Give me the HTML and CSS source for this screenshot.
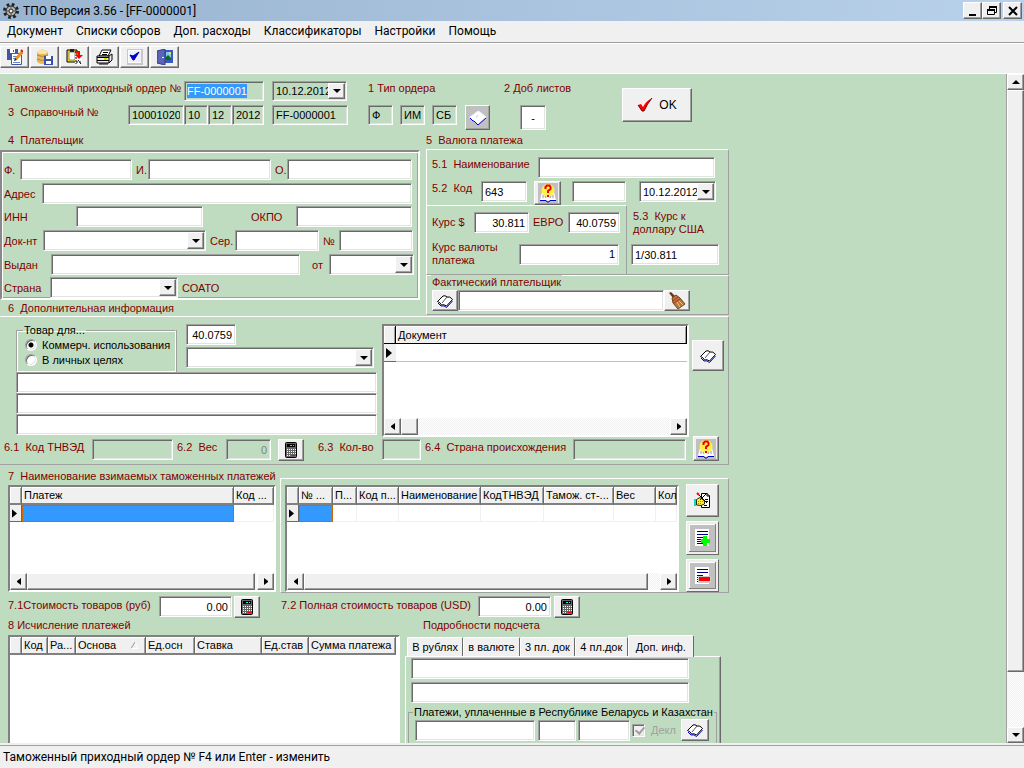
FILE: index.html
```html
<!DOCTYPE html>
<html lang="ru">
<head>
<meta charset="utf-8">
<title>ТПО Версия 3.56 - [FF-0000001]</title>
<link rel="stylesheet" href="styles.css">
</head>
<body>
<svg class="defs" aria-hidden="true">
  <symbol id="book" viewBox="0 0 16 16">
    <path d="M0.500 8.500L6 3Q8 2 10 4Q13 3 15.500 6.500L9.500 13Q7 11 4.500 12Q3 9 0.500 8.500Z" fill="#fff" stroke="#000"/>
    <path d="M1 10L4 13Q7 12 9.500 14.500L15.500 8" fill="none" stroke="#00c"/>
    <path d="M10 4L5 10" stroke="#555"/>
  </symbol>
  <symbol id="page" viewBox="0 0 18 16">
    <path d="M1 7L9 1L11 2L17 7L9 14L1 8Z" fill="#fff" stroke="#eee"/>
    <path d="M1 8L4 11L5 11L9 15L17 8" fill="none" stroke="#00e"/>
    <path d="M9 5L7 8" stroke="#ccc"/>
  </symbol>
  <symbol id="help" viewBox="0 0 20 20">
    <path d="M0 0H20V20H0Z" fill="#c0c0c0"/>
    <path d="M2 17L4 9H7L9 12L11 12L13 9H16L18 17H12L10 18L8 17Z" fill="#fff"/>
    <path d="M2 17.500H8L9 19H11L12 17.500H18" fill="none" stroke="#00c"/>
    <circle cx="10" cy="7.500" r="6.500" fill="#fff04a"/>
    <path d="M5 12V15M15 12V15M7 13L8 15M13 13L12 15" stroke="#999"/>
    <path d="M7.500 6V4L9 2.500H11.500L12.500 4V6L10 8V10M10 12V14" fill="none" stroke="#e00" stroke-width="2"/>
  </symbol>
  <symbol id="calc" viewBox="0 0 12 16">
    <rect x="0.500" y="0.500" width="11" height="15" rx="1" fill="#666" stroke="#000"/>
    <path d="M2 2H10V5H2Z" fill="#000"/>
    <path d="M5 3H7V4H5ZM8 3H9V4H8Z" fill="#0ff"/>
    <path d="M2 7.500H11M2 9.500H11M2 11.500H11M2 13.500H6" stroke="#fff" stroke-dasharray="1 1"/>
    <path d="M7 13H10V14H7Z" fill="#f00"/>
  </symbol>
  <symbol id="broom" viewBox="0 0 18 18">
    <path d="M1 1L3 0L7 4L5 6Z" fill="#6a3512"/>
    <path d="M4 6L8 3L12 6L17 12L10 17L5 11Z" fill="#b57a3c" stroke="#6f451d"/>
    <path d="M5 9L10 5M6 11L12 7" stroke="#c22"/>
    <path d="M9 10L12 15M11 9L15 13" stroke="#edc27f"/>
  </symbol>
  <symbol id="lines" viewBox="0 0 17 17">
    <path d="M1 0H15V17H1Z" fill="#fff"/>
    <path d="M3 2.500H14M3 5.500H14M3 8.500H9M3 10.500H7M3 12.500H7M3 14.500H9" stroke="#000080"/>
  </symbol>
  <symbol id="left" viewBox="0 0 4 7"><path d="M4 0V7L0 4V3Z"/></symbol>
  <symbol id="right" viewBox="0 0 4 7"><path d="M0 0V7L4 4V3Z"/></symbol>
  <symbol id="down" viewBox="0 0 8 4"><path d="M0 0H8L4 4Z"/></symbol>
  <symbol id="marker" viewBox="0 0 6 10"><path d="M0 0L6 5L0 10Z"/></symbol>
</svg>

<div class="app">
  <header class="titlebar">
    <svg class="gear" viewBox="0 0 16 16" aria-hidden="true">
      <circle cx="8" cy="8" r="6.500" fill="none" stroke="#222" stroke-width="3" stroke-dasharray="2.6 2.5"/>
      <circle cx="8" cy="8" r="5" fill="#b5b5ae" stroke="#222"/>
      <circle cx="8" cy="8" r="2" fill="#eee" stroke="#222"/>
      <path d="M8 3V6M3 8H6M10 8H13M8 10V13" stroke="#555"/>
    </svg>
    <h1>ТПО Версия 3.56 - [FF-0000001]</h1>
    <div class="winbtns">
      <button class="btn" aria-label="Свернуть"><svg width="12" height="12" viewBox="0 0 12 12"><path d="M2 9H9V11H2Z"/></svg></button>
      <button class="btn" aria-label="Восстановить"><svg width="12" height="12" viewBox="0 0 12 12" fill="none" stroke="#000"><path d="M3.500 5V2.500H10.500V7.500H9M1.500 5.500H8.500V9.500H1.500Z"/><path d="M3 2H11M1 5H9" stroke-width="2"/></svg></button>
      <button class="btn close" aria-label="Закрыть"><svg width="12" height="12" viewBox="0 0 12 12"><path d="M2 2L10 10M10 2L2 10" stroke="#000" stroke-width="2"/></svg></button>
    </div>
  </header>

  <nav class="menubar">
    <a href="#">Документ</a><a href="#">Списки сборов</a><a href="#">Доп. расходы</a><a href="#">Классификаторы</a><a href="#">Настройки</a><a href="#">Помощь</a>
  </nav>

  <div class="toolbar">
    <button class="btn" aria-label="Сохранить"><svg width="16" height="16" viewBox="0 0 16 16">
      <path d="M0 0H11V11H0Z" fill="#3f57a6"/><path d="M3 0H8V4H3Z" fill="#fff"/><path d="M6 1H7V3H6Z" fill="#3f57a6"/><path d="M4.500 4.500H14.500V15.500H4.500Z" fill="#fff" stroke="#3f57a6"/><path d="M6 7.500H11M6 9.500H9M6 13.500H13" stroke="#5b8ad0"/><path d="M15 3L9 10" stroke="#f0901c" stroke-width="3"/><path d="M14 1L16 3" stroke="#c22" stroke-width="2"/><path d="M8 9L7 12L10 11Z" fill="#222"/></svg></button>
    <button class="btn" aria-label="Сохранить в базу"><svg width="16" height="16" viewBox="0 0 16 16">
      <path d="M0 3Q5.500 -2 11 3V13Q5 17 0 13Z" fill="#e6b95c"/><ellipse cx="5.500" cy="3" rx="5" ry="2" fill="#fbe7ae"/><path d="M0 6Q5 9 11 6M0 10Q5 13 11 10" stroke="#b98423" fill="none"/><path d="M7 7H16V16H7Z" fill="#3c4fa8"/><path d="M9 7H14V10H9ZM9 12H14V15H9Z" fill="#fff"/></svg></button>
    <button class="btn" aria-label="Вставить"><svg width="18" height="16" viewBox="0 0 18 16">
      <path d="M1 1H11V13H1Z" fill="#ffe600" stroke="#000"/><path d="M3 3H9V11H3Z" fill="#fff" stroke="#888"/><path d="M4 0H8V3H4Z" fill="#222"/><path d="M9 7H16V15.500H9Z" fill="#fff"/><path d="M9 2H14V6H17L13 10L9 6H12V4H9Z" fill="#f00"/><path d="M10 8V15M10 13H16M12 11L15 15" stroke="#000" stroke-dasharray="2 1" fill="none"/></svg></button>
    <button class="btn" aria-label="Печать"><svg width="18" height="16" viewBox="0 0 18 16">
      <path d="M6 1H15L12 7H3Z" fill="#fff" stroke="#000"/><path d="M1 7H13L16 5V11L13 14H1Z" fill="#eee" stroke="#000"/><path d="M1 8.500H13M1 11.500H13M13 7V14M7 3.500H12M6 5.500H11M3 15H12" stroke="#000"/><path d="M8 10H11" stroke="#dd0" stroke-width="2"/></svg></button>
    <button class="btn" aria-label="Проверить"><svg width="16" height="16" viewBox="0 0 16 16">
      <path d="M0 0H16V16H0Z" fill="#c8c8c8"/><path d="M1 1H14V14H1Z" fill="#fff"/><path d="M2 2H14V13H2Z" fill="#eef"/><path d="M3 6L6 7L12 3L7 11H6Z" fill="#0000c0" stroke="#0000c0"/></svg></button>
    <button class="btn" aria-label="Выход"><svg width="16" height="16" viewBox="0 0 16 16">
      <path d="M6 1H16V14H6Z" fill="#3b57c4"/><path d="M9 3H14V11H9Z" fill="#7fc8e8"/><path d="M9 8L11 6L14 9V11H9Z" fill="#116622"/><path d="M12 3H14V5H12Z" fill="#fd3"/><path d="M0 2L8 0V16L0 14Z" fill="#5a64b8" stroke="#333c84"/><path d="M5 8H7V9H5Z" fill="#fff"/></svg></button>
  </div>

  <main class="main">
    <form class="workspace">
      <div class="form">
        <section class="head">
          <div class="head-rows">
            <div class="row r-order">
              <label for="ord">Таможенный приходный ордер №</label>
              <span class="field flat"><input id="ord" value="FF-0000001" hidden><mark>FF-0000001</mark></span>
              <span class="combo flat"><select aria-label="Дата ордера"><option>10.12.2012</option></select><i class="btn"><svg width="8" height="4"><use href="#down"/></svg></i></span>
              <span class="lbl">1 Тип ордера</span>
              <label for="sheets">2 Доб листов</label>
            </div>
            <div class="row r-ref">
              <label for="ref">3&nbsp; Справочный №</label>
              <input id="ref" class="flat" value="10001020"><input class="flat" aria-label="День" value="10"><input class="flat" aria-label="Месяц" value="12"><input class="flat" aria-label="Год" value="2012">
              <input class="flat c6" aria-label="Номер" value="FF-0000001">
              <input class="flat c8" aria-label="Тип 1" value="Ф"><input class="flat c10" aria-label="Тип 2" value="ИМ"><input class="flat c12" aria-label="Тип 3" value="СБ">
              <button type="button" class="btn pagebtn c14" aria-label="Справочник типов"><svg width="18" height="16"><use href="#page"/></svg></button>
              <input id="sheets" class="c16 mid" value="-">
            </div>
          </div>
          <button type="button" class="btn ok"><svg width="16" height="16" viewBox="0 0 16 16" aria-hidden="true"><path d="M1 8L4 7L6 10Q9 4 15 1Q10 7 7 14H5Z" fill="#f00"/><path d="M1 8L5 14H7Q10 7 15 1" fill="none" stroke="#700"/></svg>OK</button>
        </section>

        <section class="cols">
          <div class="payer">
            <h2>4&nbsp; Плательщик</h2>
            <div class="payer-panel">
              <div class="row p1"><label for="f">Ф.</label><input id="f"><label class="in" for="i">И.</label><input id="i"><label class="in" for="o">О.</label><input id="o"></div>
              <div class="row p2"><label for="addr">Адрес</label><input id="addr"></div>
              <div class="row p3"><label for="inn">ИНН</label><input id="inn"><label class="far" for="okpo">ОКПО</label><input id="okpo"></div>
              <div class="row p4"><label for="doc">Док-нт</label><span class="combo"><select id="doc"><option></option></select><i class="btn"><svg width="8" height="4"><use href="#down"/></svg></i></span><label class="in" for="ser">Сер.</label><input id="ser"><label class="in" for="num">№</label><input id="num"></div>
              <div class="row p5"><label for="iss">Выдан</label><input id="iss"><label class="from" for="ot">от</label><span class="combo"><select id="ot"><option></option></select><i class="btn"><svg width="8" height="4"><use href="#down"/></svg></i></span></div>
              <div class="row p6"><label for="country">Страна</label><span class="combo"><select id="country"><option></option></select><i class="btn"><svg width="8" height="4"><use href="#down"/></svg></i></span><span class="lbl in">СОАТО</span></div>
            </div>
            <h2 class="h6">6&nbsp; Дополнительная информация</h2>
          </div>

          <div class="currency">
            <h2>5&nbsp; Валюта платежа</h2>
            <div class="cur-panel">
              <div class="row top v1"><label for="cname">5.1&nbsp; Наименование</label><input id="cname"></div>
              <div class="row top v2"><label for="ccode">5.2&nbsp; Код</label><input id="ccode" value="643"><button type="button" class="btn c4" aria-label="Справочник валют"><svg width="20" height="20"><use href="#help"/></svg></button><input class="c6" aria-label="Валюта"><span class="combo c8"><select aria-label="Дата курса"><option>10.12.2012</option></select><i class="btn"><svg width="8" height="4"><use href="#down"/></svg></i></span></div>
              <div class="rates">
                <div class="rates-l">
                  <div class="row v3"><label for="usd">Курс $</label><input id="usd" class="num" value="30.811"><label class="in" for="eur">ЕВРО</label><input id="eur" class="num" value="40.0759"></div>
                  <div class="row v4"><label for="rate">Курс валюты<br>платежа</label><input id="rate" class="num" value="1"></div>
                </div>
                <div class="rates-r"><label for="r53">5.3&nbsp; Курс к<br>доллару США</label><input id="r53" value="1/30.811"></div>
              </div>
            </div>
            <fieldset class="actual">
              <legend>Фактический плательщик</legend>
              <div class="row v5"><button type="button" class="btn" aria-label="Выбрать"><svg width="16" height="16"><use href="#book"/></svg></button><input aria-label="Фактический плательщик"><button type="button" class="btn" aria-label="Очистить"><svg width="18" height="18"><use href="#broom"/></svg></button></div>
            </fieldset>
          </div>
        </section>

        <section class="extra">
          <div class="extra-main">
            <div class="extra-l">
              <div class="purpose-row">
                <fieldset class="purpose">
                  <legend>Товар для...</legend>
                  <label><input type="radio" name="use" checked>Коммерч. использования</label>
                  <label><input type="radio" name="use">В личных целях</label>
                </fieldset>
                <div class="purpose-r">
                  <input class="num short" aria-label="Курс" value="40.0759">
                  <span class="combo"><select aria-label="Вид"><option></option></select><i class="btn"><svg width="8" height="4"><use href="#down"/></svg></i></span>
                </div>
              </div>
              <input aria-label="Строка 1"><input aria-label="Строка 2"><input aria-label="Строка 3">
            </div>
            <div class="grid docs">
              <table>
                <colgroup><col class="ind"><col></colgroup>
                <thead><tr><th></th><th>Документ</th></tr></thead>
                <tbody><tr><td class="cur"><svg width="6" height="10"><use href="#marker"/></svg></td><td></td></tr></tbody>
              </table>
              <div class="hscroll"><i class="btn"><svg width="4" height="7"><use href="#left"/></svg></i><i class="btn thumb"></i><i class="track"></i><i class="btn"><svg width="4" height="7"><use href="#right"/></svg></i></div>
            </div>
            <button type="button" class="btn docbtn" aria-label="Документы"><svg width="16" height="16"><use href="#book"/></svg></button>
          </div>
          <div class="row top e1">
            <label for="e1">6.1&nbsp; Код ТНВЭД</label><input id="e1" class="flat" disabled>
            <label class="in" for="e2">6.2&nbsp; Вес</label><input id="e2" class="flat num" value="0" disabled>
            <button type="button" class="btn c6" aria-label="Калькулятор"><svg width="12" height="16"><use href="#calc"/></svg></button>
            <label class="c8" for="e3">6.3&nbsp; Кол-во</label><input id="e3" class="flat" disabled>
            <label class="in" for="e4">6.4&nbsp; Страна происхождения</label><input id="e4" class="flat" disabled>
            <button type="button" class="btn c13" aria-label="Справочник стран"><svg width="20" height="20"><use href="#help"/></svg></button>
          </div>
        </section>

        <section class="pays">
          <div class="pays-l">
            <h2>7&nbsp; Наименование взимаемых таможенных платежей</h2>
            <div class="grid blue">
              <table>
                <colgroup><col class="ind"><col><col class="w40"></colgroup>
                <thead><tr><th></th><th>Платеж</th><th>Код ...</th></tr></thead>
                <tbody><tr><td class="cur"><svg width="5" height="9" viewBox="0 0 6 10"><use href="#marker"/></svg></td><td class="hot"></td><td></td></tr></tbody>
              </table>
              <div class="hscroll"><i class="btn"><svg width="4" height="7"><use href="#left"/></svg></i><i class="btn thumb long"></i><i class="track t4"></i><i class="btn"><svg width="4" height="7"><use href="#right"/></svg></i></div>
            </div>
          </div>
          <div class="pays-r">
            <div class="grid blue">
              <table>
                <colgroup><col class="ind"><col class="w34"><col class="w24"><col class="w42"><col class="w82"><col class="w63"><col class="w70"><col class="w42"><col></colgroup>
                <thead><tr><th></th><th>№ ...</th><th>П...</th><th>Код п...</th><th>Наименование</th><th>КодТНВЭД</th><th>Тамож. ст-...</th><th>Вес</th><th>Кол</th></tr></thead>
                <tbody><tr><td class="cur"><svg width="5" height="9" viewBox="0 0 6 10"><use href="#marker"/></svg></td><td class="hot"></td><td></td><td></td><td></td><td></td><td></td><td></td><td></td></tr></tbody>
              </table>
              <div class="hscroll"><i class="btn"><svg width="4" height="7"><use href="#left"/></svg></i><i class="btn thumb long"></i><i class="track t12"></i><i class="btn"><svg width="4" height="7"><use href="#right"/></svg></i></div>
            </div>
            <div class="side">
              <button type="button" class="btn" aria-label="Изменить"><svg width="17" height="17" viewBox="0 0 17 17"><path d="M7.500 1.500H13L15.500 4V15.500H7.500Z" fill="#fff" stroke="#000"/><path d="M13 1V4H16" fill="none" stroke="#000"/><path d="M11 7.500H14M12 9.500H14M10 13.500H13" stroke="#000"/><path d="M2.500 7.500L6 5.500L10.500 9V12L7 13.500L2.500 13Z" fill="#fe3" stroke="#332900"/><path d="M4 9.500H9M4 11.500H8" stroke="#a80" stroke-dasharray="1 1"/><path d="M0 7H2V14H0Z" fill="#0dd"/><path d="M3 1L13 11M12 2L6 8" stroke="#000"/><path d="M3 1L5 3" stroke="#e00" stroke-width="2"/></svg></button>
              <button type="button" class="btn gray" aria-label="Добавить"><svg width="17" height="17" viewBox="0 0 17 17"><use href="#lines" width="17" height="17"/><path d="M9 7H13V10H16V14H13V17H9V14H7V10H9Z" fill="#0f0"/></svg></button>
              <button type="button" class="btn gray" aria-label="Удалить"><svg width="17" height="17" viewBox="0 0 17 17"><use href="#lines" width="17" height="17"/><path d="M4 9H17V16H4Z" fill="#ccc"/><path d="M5 10H16V14H5Z" fill="#f00"/></svg></button>
            </div>
          </div>
        </section>

        <div class="row top totals">
          <label for="t1">7.1Стоимость товаров (руб)</label><input id="t1" class="num" value="0.00"><button type="button" class="btn c3" aria-label="Калькулятор"><svg width="12" height="16"><use href="#calc"/></svg></button>
          <label class="c5" for="t2">7.2 Полная стоимость товаров (USD)</label><input id="t2" class="num" value="0.00"><button type="button" class="btn c7" aria-label="Калькулятор"><svg width="12" height="16"><use href="#calc"/></svg></button>
        </div>

        <section class="bottom">
          <div class="calc">
            <h2>8 Исчисление платежей</h2>
            <div class="grid blue tall">
              <table>
                <colgroup><col class="ind"><col class="w26"><col class="w28"><col class="w70"><col class="w49"><col class="w67"><col class="w47"><col class="w87"></colgroup>
                <thead><tr><th></th><th>Код</th><th>Ра...</th><th><span class="sort">Основа<svg width="8" height="7" viewBox="0 0 8 7"><path d="M4 0L7 6.500H0" stroke="#fff" fill="none"/><path d="M4 0L0 6.500" stroke="#999" fill="none"/></svg></span></th><th>Ед.осн</th><th>Ставка</th><th>Ед.став</th><th>Сумма платежа</th></tr></thead>
              </table>
            </div>
          </div>
          <div class="details">
            <h2>Подробности подсчета</h2>
            <div class="tabs" role="tablist">
              <button type="button" role="tab">В рублях</button><button type="button" role="tab">в валюте</button><button type="button" role="tab">3 пл. док</button><button type="button" role="tab">4 пл.док</button><button type="button" role="tab" class="on" aria-selected="true">Доп. инф.</button>
            </div>
            <div class="tabpanel">
              <input aria-label="Доп. инф. 1"><input aria-label="Доп. инф. 2">
              <fieldset class="paid">
                <legend>Платежи, уплаченные в Республике Беларусь и Казахстан</legend>
                <div class="row d1"><input aria-label="Платеж"><input class="c3" aria-label="Код"><input class="c5" aria-label="Сумма"><label class="decl c7"><input type="checkbox" checked disabled>Декл</label><button type="button" class="btn" aria-label="Справочник"><svg width="16" height="16"><use href="#book"/></svg></button></div>
              </fieldset>
            </div>
          </div>
        </section>
      </div>
    </form>
    <div class="vscroll"><i class="btn"><svg class="up" width="8" height="4"><use href="#down"/></svg></i><i class="btn thumb"></i><i class="track"></i><i class="btn"><svg width="8" height="4"><use href="#down"/></svg></i></div>
  </main>
  <footer class="status">Таможенный приходный ордер № F4 или Enter - изменить</footer>
</div>
</body>
</html>
```
FILE: styles.css
```css
:root {
  --green: #c0dcc0;
  --face: #f0f0f0;
  --mid: #a0a0a0;
  --dark: #696969;
  --light: #e3e3e3;
  --wine: #800000;
  --ui: Roboto, "Open Sans", sans-serif;
  --form: "Liberation Sans", Arial, sans-serif;
}
* { box-sizing: border-box; }
body { margin: 0; font: 11px/14px var(--form); color: #000; background: var(--face); }
.defs { display: none; }
svg { display: block; flex: none; }
h1, h2 { margin: 0; font-size: inherit; font-weight: normal; }
i { font-style: normal; }

.app { display: flex; flex-direction: column; height: 100vh; overflow: hidden; }

.titlebar { display: flex; align-items: center; flex: none; height: 21px; padding: 0 2px 0 3px; gap: 4px; background: linear-gradient(90deg, #99b4d1, #b9d1ea); font: 12px/20px var(--ui); }
.gear { width: 16px; height: 16px; }
.titlebar h1 { flex: 1; }
.winbtns { display: flex; }
.winbtns .btn { width: 19px; height: 17px; }
.winbtns .close { margin-left: 2px; }

.menubar { display: flex; flex: none; height: 22px; padding-left: 7px; gap: 13px; border-bottom: 1px solid var(--mid); font: 12px/20px var(--ui); }
.menubar a { color: #000; text-decoration: none; white-space: nowrap; }
.toolbar { display: flex; flex: none; height: 31px; padding: 2px 0 0; gap: 1px; border-top: 1px solid #fff; border-bottom: 1px solid #fff; }
.toolbar .btn { width: 29px; height: 22px; }

.btn { display: flex; align-items: center; justify-content: center; padding: 0; font: inherit; color: #000; background: var(--face); border: 1px solid; border-color: #fff var(--dark) var(--dark) #fff; box-shadow: inset -1px -1px var(--mid); }

.main { display: flex; flex: 1; min-height: 0; }
.workspace { flex: 1; min-width: 0; overflow: hidden; background: var(--green); color: var(--wine); }
.form { max-width: 729px; padding-top: 7px; }

input, .combo, .field { width: 100%; min-width: 0; height: 21px; margin: 0; padding: 0 3px; font: inherit; color: #000; background: #fff; border: 1px solid; border-color: var(--mid) #fff #fff var(--mid); border-radius: 0; box-shadow: inset 1px 1px var(--dark), inset -1px -1px var(--light); outline: 0; }
.flat, .flat select { background: var(--green); }
.flat { height: 20px; }
input:disabled { color: #808080; }
.num { text-align: right; }
.mid { text-align: center; }
.combo { display: flex; padding: 1px; }
.combo select { flex: 1; min-width: 0; padding: 0 0 0 2px; border: 0; outline: 0; appearance: none; font: inherit; color: #000; background-color: transparent; text-overflow: clip; }
.combo .btn { flex: none; width: 17px; }
.field { padding: 0 2px; }
.field mark { display: inline-block; margin-top: 2px; color: #fff; background: #3399ff; }

.row { display: grid; align-items: center; white-space: nowrap; }
.row.top { align-items: start; }
.in { padding-left: 4px; }

.head { display: flex; align-items: flex-start; }
.head-rows { display: grid; width: 622px; padding-left: 8px; gap: 4px; }
.head .row { align-items: start; }
.r-order { grid-template-columns: 176px 80px 83px 136px auto; }
.r-order .combo { width: auto; margin-left: 8px; }
.r-order .lbl { padding-left: 21px; }
.r-order > :last-child { padding-left: 21px; }
.r-ref { grid-template-columns: 120px 56px 24px 24px 32px 8px 76px 20px 25px 7px 25px 7px 25px 8px 25px 30px 26px; }
.r-ref .c6 { grid-column: 7; }
.r-ref .c8 { grid-column: 9; }
.r-ref .c10 { grid-column: 11; }
.r-ref .c12 { grid-column: 13; }
.r-ref .c14 { grid-column: 15; }
.r-ref .c16 { grid-column: 17; height: 25px; }
.pagebtn { height: 25px; background: #c0c0c0; }
.ok { width: 70px; height: 34px; margin-top: 7px; gap: 6px; font-size: 12px; }

.cols { display: flex; gap: 6px; margin-top: 2px; }
.cols h2 { height: 17px; padding-left: 8px; line-height: 16px; }
.payer { flex: none; width: 420px; }
.payer-panel { margin-top: 1px; padding: 7px 2px 0; height: 150px; border: 2px solid; border-color: #888 #fff #fff #888; box-shadow: inset 1px 1px #fff, inset -1px -1px var(--mid); }
.payer .h6 { height: 16px; line-height: 16px; }
.payer-panel .row { height: 21px; margin-bottom: 3px; }
.payer-panel .p2, .payer-panel .p5 { margin-bottom: 2px; }
.p1 { grid-template-columns: 16px 112px 16px 123px 16px 125px; }
.p2 { grid-template-columns: 38px 370px; }
.p3 { grid-template-columns: 72px 127px 93px 116px; }
.far { padding-left: 48px; }
.p4 { grid-template-columns: 39px 163px 29px 84px 20px 74px; }
.p5 { grid-template-columns: 47px 249px 29px 85px; }
.from { padding-left: 12px; }
.p6 { grid-template-columns: 46px 128px auto; }

.currency { flex: 1; min-width: 0; }
.currency h2 { padding-left: 0; }
.cur-panel { padding-top: 7px; border: 1px solid; border-color: #fff var(--mid) var(--mid) #fff; }
.cur-panel > .row { height: 24px; padding-left: 5px; }
.v1 { grid-template-columns: 106px 177px; }
.v2 { grid-template-columns: 49px 46px 7px 27px 11px 54px 13px 77px; }
.v2 .c4 { grid-column: 4; height: 24px; }
.v2 .c6 { grid-column: 6; }
.v2 .c8 { grid-column: 8; }
.rates { display: flex; line-height: 13px; }
.rates-l { flex: none; width: 200px; padding: 6px 0 7px 5px; border-top: 1px solid #fff; border-right: 1px solid var(--mid); }
.v3 { grid-template-columns: 42px 55px 39px 52px; }
.v4 { grid-template-columns: 87px 100px; margin-top: 8px; }
.rates-r { flex: 1; padding: 5px 9px 0 4px; }
.rates-r label { display: block; padding-left: 2px; margin-bottom: 8px; }
fieldset { min-width: 0; margin: 0; border: 1px solid; border-color: #fff var(--mid) var(--mid) #fff; }
legend { padding: 0 1px; }
.actual { padding: 0 5px 3px; }
.actual legend { float: left; margin: -1px 0 0 -1px; background: var(--green); line-height: 15px; }
.v5 { clear: both; grid-template-columns: 26px 206px 26px; }
.v5 .btn { height: 21px; }

.extra { padding: 7px 4px 0 4px; border-top: 1px solid #fff; border-right: 1px solid var(--mid); border-bottom: 1px solid var(--mid); }
.extra-main { display: flex; align-items: flex-start; height: 115px; }
.extra-l { width: 361px; margin-left: 12px; }
.extra-l > input { display: block; }
.purpose-row { display: flex; height: 48px; }
.purpose { width: 160px; padding: 0 0 0 8px; color: #000; border-color: var(--mid) #fff #fff var(--mid); box-shadow: inset 1px 1px #fff, 1px 0 var(--mid); }
.purpose legend { margin-left: -2px; line-height: 13px; }
.purpose label { display: flex; align-items: center; height: 15px; gap: 5px; white-space: nowrap; }
input[type=radio] { flex: none; width: 12px; height: 12px; padding: 0; appearance: none; border-radius: 50%; }
input[type=radio]:checked { background: radial-gradient(circle, #000 2px, #fff 3px); }
.purpose-r { flex: 1; display: flex; flex-direction: column; gap: 2px; padding: 0 3px 0 10px; }
.purpose-r .short { width: 50px; }

.grid { display: flex; flex-direction: column; overflow: hidden; color: #000; background: #fff; border: 2px solid; border-color: #808080 #fff #fff #808080; }
.grid table { width: 100%; table-layout: fixed; border-collapse: separate; border-spacing: 0; }
.grid th { height: 18px; padding: 0 0 0 2px; overflow: hidden; font-weight: normal; text-align: left; white-space: nowrap; background: var(--face); border-right: 1px solid var(--dark); border-bottom: 2px solid #808080; box-shadow: inset 1px 1px #fff, inset -1px 0 var(--mid); }
.grid td { height: 17px; padding: 0; border-right: 1px solid #f0f0f0; border-bottom: 1px solid #f0f0f0; }
.grid .cur { padding-left: 2px; background: var(--face); border-right-color: var(--dark); border-bottom-color: var(--dark); }
.grid .hot { background: #3399ff; border: 1px solid #c60; }
.ind { width: 12px; }
.w24 { width: 24px; } .w26 { width: 26px; } .w28 { width: 28px; } .w34 { width: 34px; }
.w40 { width: 40px; } .w42 { width: 42px; } .w47 { width: 47px; } .w49 { width: 49px; }
.w63 { width: 63px; } .w67 { width: 67px; } .w70 { width: 70px; } .w82 { width: 82px; } .w87 { width: 87px; }
.docs { width: 307px; height: 113px; margin-left: 5px; }
.docs th { border-color: #000; border-bottom-width: 1px; }
.docs td { height: 18px; border-color: #c0c0c0; border-right: 0; }
.docbtn { width: 32px; height: 31px; margin: 16px 0 0 3px; }
.hscroll { display: flex; height: 17px; margin-top: auto; }
.hscroll .btn { width: 17px; flex: none; }
.hscroll .long { flex: 1; }
.track { flex: 1; background: conic-gradient(#fff 25%, #f0f0f0 0 50%, #fff 0 75%, #f0f0f0 0) 0 0 / 2px 2px; }
.hscroll .t4 { flex: none; width: 2px; }
.hscroll .t12 { flex: none; width: 12px; }

.e1 { grid-template-columns: 88px 81px 53px 45px 7px 26px 14px 64px 39px 152px 113px 7px 26px; height: 25px; }
.e1 label { padding-top: 1px; }
.e1 .c6 { grid-column: 6; height: 22px; }
.e1 .c8 { grid-column: 8; }
.e1 .c13 { grid-column: 13; height: 25px; margin-top: -3px; }
.e1 .flat { height: 21px; }

.pays { display: flex; gap: 4px; margin-top: 3px; padding-left: 8px; }
.pays-l { flex: none; width: 268px; }
.pays-l h2 { height: 17px; line-height: 16px; white-space: nowrap; }
.pays .grid { height: 107px; }
.pays-r { display: flex; flex: 1; min-width: 0; gap: 7px; margin-top: 10px; padding: 6px 9px 0 4px; height: 115px; border: 1px solid; border-color: #fff var(--mid) var(--mid) #fff; }
.pays-r .grid { flex: 1; min-width: 0; }
.side { display: flex; flex-direction: column; flex: none; gap: 4px; margin-top: -1px; }
.side .btn { width: 33px; height: 34px; }
.side .gray { background: #c0c0c0; box-shadow: inset 0 0 0 2px #eee, inset -3px -3px #808080, inset 3px 3px #fff; }

.totals { grid-template-columns: 151px 73px 2px 26px 21px 197px 73px 3px 26px; height: 23px; margin-top: 3px; padding-left: 8px; }
.totals label { padding-top: 2px; }
.totals .btn { height: 22px; }
.totals .c3 { grid-column: 4; }
.totals .c5 { grid-column: 6; }
.totals .c7 { grid-column: 9; }

.bottom { display: flex; gap: 5px; padding-left: 8px; }
.calc { flex: none; width: 392px; }
.calc h2, .details h2 { height: 16px; line-height: 13px; }
.tall { height: 200px; }
.calc table { width: 386px; }
.sort { display: flex; align-items: center; justify-content: space-between; padding-right: 6px; }
.details { width: 316px; }
.details h2 { padding-left: 18px; }
.tabs { display: flex; align-items: flex-end; height: 21px; margin-right: 27px; padding-left: 2px; color: #000; }
.tabs button { flex: 1 1 auto; height: 19px; padding: 0 4px; font: inherit; white-space: nowrap; background: var(--face); border: 1px solid; border-color: #fff var(--dark) transparent #fff; border-bottom: 0; border-radius: 2px 2px 0 0; }
.tabs button.on { height: 22px; margin-bottom: -1px; padding: 0 7px; }
.tabpanel { display: flex; flex-direction: column; gap: 3px; padding: 1px 3px 0 5px; height: 200px; border: 1px solid; border-color: #fff var(--dark) #fff #fff; box-shadow: inset -1px 0 var(--mid); }
.tabpanel > input { flex: none; width: 278px; }
.paid { margin: 0 0 0 -3px; padding: 0 0 0 6px; height: 100px; color: #000; border-color: var(--mid); }
.paid legend { margin-left: -2px; line-height: 13px; white-space: nowrap; }
.d1 { grid-template-columns: 120px 3px 38px 2px 52px 2px 49px 28px; }
.d1 .c3 { grid-column: 3; }
.d1 .c5 { grid-column: 5; }
.d1 .c7 { grid-column: 7; }
.d1 .btn { height: 22px; }
.decl { display: flex; align-items: center; gap: 6px; color: var(--mid); }
input[type=checkbox] { flex: none; width: 13px; height: 13px; padding: 0; appearance: none; background: var(--face); }
input[type=checkbox]:checked::before { content: ""; display: block; width: 4px; height: 7px; margin: 0 0 0 4px; border: solid var(--mid); border-width: 0 2px 2px 0; rotate: 40deg; }

.vscroll { display: flex; flex-direction: column; flex: none; width: 18px; border-left: 1px solid var(--mid); }
.vscroll .btn { flex: none; height: 16px; }
.vscroll .thumb { flex: 10.5; }
.up { rotate: 180deg; }
.status { flex: none; height: 25px; padding: 2px 3px 0; border-top: 2px solid var(--face); font: 12px/20px var(--ui); box-shadow: inset 0 1px var(--mid); }
```
